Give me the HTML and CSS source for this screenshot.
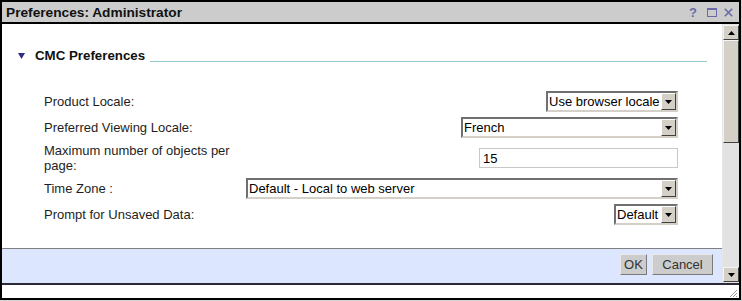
FILE: index.html
```html
<!DOCTYPE html>
<html lang="en">
<head>
    <meta charset="UTF-8">
    <title>Preferences: Administrator</title>
    <link rel="stylesheet" href="styles.css">
</head>
<body>

    <div class="dialog">
        <div class="titlebar">
            <span class="title">Preferences: Administrator</span>
            <div class="win-icons">
                <span class="help">?</span>
                <svg class="max" width="10" height="9" viewBox="0 0 10 9"><rect x="0.5" y="1" width="9" height="7.5" fill="none" stroke="#6a6aa8" stroke-width="1"/><rect x="0" y="0" width="10" height="2" fill="#6a6aa8"/></svg>
                <svg class="close" width="9" height="9" viewBox="0 0 9 9"><path d="M0.8 0.8 L8.2 8.2 M8.2 0.8 L0.8 8.2" stroke="#6a6aa8" stroke-width="1.6"/></svg>
            </div>
        </div>

        <div class="main-area">
            <div class="pane">
                <div class="content">
                    <div class="section-head">
                        <svg class="toggle" width="7" height="6" viewBox="0 0 7 6"><polygon points="0,0 7,0 3.5,6" fill="#2d2d86"/></svg>
                        <span class="section-title">CMC Preferences</span>
                        <span class="section-rule"></span>
                    </div>

                    <div class="prefs">
                        <div class="label">Product Locale:</div>
                        <div class="control">
                            <div class="combo w-locale">
                                <span class="combo-value">Use browser locale</span>
                                <span class="combo-arrow"><svg width="7" height="4" viewBox="0 0 7 4"><polygon points="0,0 7,0 3.5,4" fill="#000"/></svg></span>
                            </div>
                        </div>

                        <div class="label">Preferred Viewing Locale:</div>
                        <div class="control">
                            <div class="combo w-viewing">
                                <span class="combo-value">French</span>
                                <span class="combo-arrow"><svg width="7" height="4" viewBox="0 0 7 4"><polygon points="0,0 7,0 3.5,4" fill="#000"/></svg></span>
                            </div>
                        </div>

                        <div class="label">Maximum number of objects per page:</div>
                        <div class="control">
                            <input type="text" class="num" value="15">
                        </div>

                        <div class="label">Time Zone :</div>
                        <div class="control">
                            <div class="combo w-full">
                                <span class="combo-value">Default - Local to web server</span>
                                <span class="combo-arrow"><svg width="7" height="4" viewBox="0 0 7 4"><polygon points="0,0 7,0 3.5,4" fill="#000"/></svg></span>
                            </div>
                        </div>

                        <div class="label">Prompt for Unsaved Data:</div>
                        <div class="control">
                            <div class="combo w-default">
                                <span class="combo-value">Default</span>
                                <span class="combo-arrow"><svg width="7" height="4" viewBox="0 0 7 4"><polygon points="0,0 7,0 3.5,4" fill="#000"/></svg></span>
                            </div>
                        </div>
                    </div>
                </div>

                <div class="footer">
                    <button type="button" class="btn btn-ok">OK</button>
                    <button type="button" class="btn btn-cancel">Cancel</button>
                </div>
            </div>

            <div class="scrollbar">
                <div class="sb-button"><svg width="7" height="4" viewBox="0 0 7 4"><polygon points="3.5,0 7,4 0,4" fill="#000"/></svg></div>
                <div class="sb-thumb"></div>
                <div class="sb-track"></div>
                <div class="sb-button"><svg width="7" height="4" viewBox="0 0 7 4"><polygon points="0,0 7,0 3.5,4" fill="#000"/></svg></div>
            </div>
        </div>

        <div class="statusbar">
            <svg class="grip" width="9" height="9" viewBox="0 0 9 9">
                <path d="M8 1 L1 8 M8 4 L4 8 M8 7 L7 8" stroke="#9a9a9a" stroke-width="1"/>
            </svg>
        </div>
    </div>

</body>
</html>
```

FILE: styles.css
```css
body {
    margin: 0;
    padding: 0;
    background-color: #d4d4d4;
    font-family: "Liberation Sans", Arial, sans-serif;
    font-size: 13px;
    color: #1e1e1e;
}

.dialog {
    width: 737px;
    height: 296px;
    border: 2px solid #000;
    background-color: #fff;
    display: flex;
    flex-direction: column;
}

/* title bar */
.titlebar {
    height: 20px;
    border-bottom: 2px solid #000;
    background-color: #cccccc;
    display: flex;
    align-items: center;
    padding: 0 6px 0 4px;
}

.title {
    flex: 1;
    font-weight: bold;
    font-size: 13.7px;
    color: #111;
}

.win-icons {
    display: flex;
    align-items: center;
}

.help {
    font-weight: bold;
    font-size: 13px;
    color: #6a6aa8;
    margin-right: 10px;
}

.max {
    margin-right: 7px;
}

/* body */
.main-area {
    height: 259px;
    display: flex;
    border-bottom: 2px solid #2b2b38;
}

.pane {
    flex: 1;
    display: flex;
    flex-direction: column;
}

.content {
    flex: 1;
    padding-top: 24px;
}

.section-head {
    display: flex;
    align-items: center;
    height: 15px;
    margin: 0 15px 0 16px;
}

.toggle {
    margin-right: 10px;
}

.section-title {
    font-weight: bold;
    font-size: 13.3px;
    color: #111;
}

.section-rule {
    flex: 1;
    height: 1px;
    background-color: #99c8c8;
    margin-left: 5px;
    align-self: flex-end;
    margin-bottom: 1px;
}

.prefs {
    margin-top: 28px;
    padding: 0 44px 0 42px;
    display: grid;
    grid-template-columns: 200px 1fr;
    column-gap: 2px;
    row-gap: 5px;
    align-items: center;
}

.label {
    line-height: 15px;
}

.control {
    display: flex;
    justify-content: flex-end;
}

/* drop-down boxes */
.combo {
    height: 21px;
    box-sizing: border-box;
    border: 2px solid;
    border-color: #707070 #d4d0c8 #d4d0c8 #707070;
    background-color: #fff;
    display: flex;
}

.combo-value {
    flex: 1;
    padding-left: 1px;
    line-height: 17px;
    white-space: nowrap;
    overflow: hidden;
    color: #000;
}

.combo-arrow {
    width: 13px;
    height: 15px;
    background-color: #d4d0c8;
    border: 1px solid;
    border-color: #fff #404040 #404040 #fff;
    display: flex;
    align-items: center;
    justify-content: center;
}

.w-locale { width: 132px; }
.w-viewing { width: 217px; }
.w-full { width: 100%; }
.w-default { width: 64px; }

.num {
    width: 199px;
    height: 20px;
    box-sizing: border-box;
    border: 1px solid #c8c8c8;
    padding: 0 3px;
    margin: 0;
    font-family: "Liberation Sans", Arial, sans-serif;
    font-size: 13px;
    color: #000;
}

/* footer */
.footer {
    height: 35px;
    box-sizing: border-box;
    border-top: 1px solid #808080;
    padding: 5px 9px 0 0;
    display: flex;
    justify-content: flex-end;
    align-items: flex-start;
    gap: 5px;
    background-color: #dce6ff;
}

.btn {
    height: 21px;
    padding: 0;
    margin: 0;
    background-color: #cccccc;
    border: 1px solid;
    border-color: #e8e8e8 #7a7a7a #7a7a7a #e8e8e8;
    font-family: "Liberation Sans", Arial, sans-serif;
    font-size: 13px;
    color: #333;
}

.btn-ok { width: 27px; }
.btn-cancel { width: 61px; }

/* scrollbar */
.scrollbar {
    width: 16px;
    padding: 1px 0 1px 1px;
    display: flex;
    flex-direction: column;
    background-color: #e6e6e6;
}

.sb-button, .sb-thumb {
    box-sizing: border-box;
    background-color: #d4d0c8;
    border: 1px solid;
    border-color: #f4f4f4 #404040 #404040 #f4f4f4;
}

.sb-button {
    height: 15px;
    display: flex;
    align-items: center;
    justify-content: center;
}

.sb-thumb {
    height: 103px;
}

.sb-track {
    flex: 1;
    background-color: #e2e2e2;
}

/* bottom strip */
.statusbar {
    flex: 1;
    display: flex;
    justify-content: flex-end;
    align-items: flex-end;
    padding: 0 1px 0 0;
}
```
